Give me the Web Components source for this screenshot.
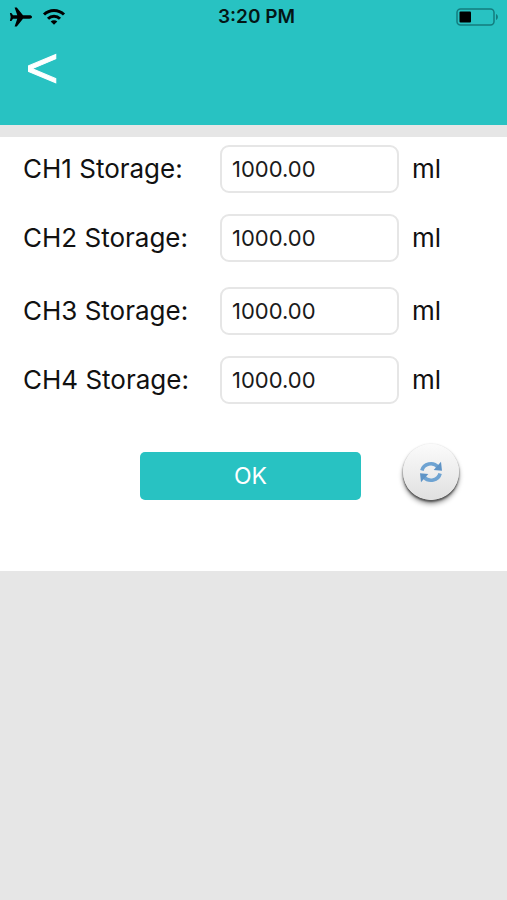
<!DOCTYPE html>
<html lang="en">
<head>
<meta charset="utf-8">
<meta name="viewport" content="width=device-width, initial-scale=1">
<title>Storage settings</title>
<style>
  html, body { margin: 0; min-height: 100%; }
  body { background: #e6e6e6; color: #111; font-family: Inter, "Liberation Sans", sans-serif; --teal: #28c2c2; }
</style>
</head>
<body>
<storage-page></storage-page>
<script>
const define = (name, html, setup) => customElements.define(name, class extends HTMLElement {
  constructor() {
    super();
    this.attachShadow({ mode: 'open' }).innerHTML = html;
  }
  connectedCallback() { if (setup) setup(this, this.shadowRoot); }
});

define('status-bar', `
<style>
  :host { display: grid; grid-template-columns: 1fr auto 1fr; align-items: center; height: 34px; padding: 0 8px; color: #041616; }
  .left { display: flex; align-items: center; gap: 10px; }
  .time { padding-left: 6px; font-size: 19px; line-height: 24px; font-weight: 600; }
  .battery { justify-self: end; }
  svg { display: block; }
</style>
<div class="left">
  <svg width="24" height="22" viewBox="0 0 24 22" role="img" aria-label="Airplane mode"><path fill="#000" d="M24 11c0-1.200-1.100-1.700-2.500-1.700h-6.500L8.800 1.500H6.600l2.700 7.800H5L3.400 6.900H1.900L2.700 11l-.8 4.100h1.500L5 12.700h4.300l-2.700 7.800h2.200l6.200-7.800h6.500c1.400 0 2.500-.5 2.500-1.700z"/></svg>
  <svg width="24" height="18" viewBox="0 0 24 18" role="img" aria-label="Wi-Fi"><g fill="none" stroke="#000" stroke-width="3"><path d="M2 6.500a14.300 14.300 0 0 1 20 0"/><path d="M6 10.700a8.500 8.500 0 0 1 12 0"/></g><path fill="#000" d="M8.700 13.500a4.700 4.700 0 0 1 6.600 0L12 16.800z"/></svg>
</div>
<div class="time">3:20 PM</div>
<svg class="battery" width="43" height="18" viewBox="0 0 43 18" role="img" aria-label="Battery low"><rect x="1" y="1" width="37" height="16" rx="3.500" fill="none" stroke="#137c7e" stroke-width="1.500"/><rect x="3.500" y="3.500" width="11.500" height="11" rx="1" fill="#000"/><path fill="#137c7e" d="M40 6c2.500.7 2.500 5.300 0 6z"/></svg>
`);

define('nav-bar', `
<style>
  :host { display: block; background: var(--teal); padding-bottom: 23px; }
  button { display: block; margin-left: 20px; width: 44px; height: 68px; padding: 0; border: 0; background: none; color: #fff; font: 56px/68px "Liberation Sans", Arial, sans-serif; -webkit-text-stroke: 1px #fff; text-align: center; }
</style>
<slot></slot>
<button type="button" aria-label="Back">&lt;</button>
`);

define('storage-field', `
<style>
  :host { display: grid; grid-template-columns: 197px 179px auto; align-items: center; }
  label, span { font-size: 26px; line-height: 32px; white-space: nowrap; }
  span { padding-left: 13px; }
  input { box-sizing: border-box; width: 100%; height: 48px; margin: 0; padding: 0 10px; border: 2px solid #e6e6e6; border-radius: 9px; background: #fff; color: #1a1a1a; font: 22px/28px Inter, "Liberation Sans", sans-serif; outline: 0; }
</style>
<label for="amount"></label>
<input id="amount" type="text" inputmode="decimal">
<span>ml</span>
`, (host, root) => {
  root.querySelector('label').textContent = host.getAttribute('label');
  root.querySelector('input').value = host.getAttribute('value');
});

define('field-pair', `
<style>:host { display: grid; gap: 21px; }</style>
<slot></slot>
`);

define('primary-button', `
<style>
  :host { display: block; }
  button { display: block; width: 100%; height: 48px; padding: 0; border: 0; border-radius: 5px; background: var(--teal); color: #fff; font: 23px/48px Inter, "Liberation Sans", sans-serif; }
</style>
<button type="button"><slot></slot></button>
`);

define('refresh-button', `
<style>
  :host { display: block; }
  button { display: grid; place-items: center; width: 56px; height: 56px; padding: 0; border: 0; border-radius: 50%; background: linear-gradient(#fbfbfb, #e0e0e0); box-shadow: 0 2px 2px #555, 0 4px 5px #0006, 0 0 2px #0002; }
</style>
<button type="button" aria-label="Refresh">
  <svg width="24" height="24" viewBox="0 0 24 24"><g fill="none" stroke="#6ea3d2" stroke-width="3.600"><path d="M2.900 10.500A9.200 8.600 0 0 1 19 7"/><path d="M21.100 13.500A9.200 8.600 0 0 1 5 17"/></g><path fill="#5f94c6" d="M22 1.800l1 9-8.300-.8zM2 22.200l-1-9 8.300.8z"/></svg>
</button>
`);

define('storage-page', `
<style>
  :host { display: block; }
  main { margin-top: 12px; background: #fff; padding: 8px 23px 71px; }
  form { display: grid; gap: 25px; }
  .actions { display: grid; grid-template-columns: 221px 56px; gap: 42px; padding: 15px 0 0 117px; align-items: end; }
</style>
<nav-bar><status-bar></status-bar></nav-bar>
<main>
  <form>
    <field-pair>
      <storage-field label="CH1 Storage:" value="1000.00"></storage-field>
      <storage-field label="CH2 Storage:" value="1000.00"></storage-field>
    </field-pair>
    <field-pair>
      <storage-field label="CH3 Storage:" value="1000.00"></storage-field>
      <storage-field label="CH4 Storage:" value="1000.00"></storage-field>
    </field-pair>
    <div class="actions">
      <primary-button>OK</primary-button>
      <refresh-button></refresh-button>
    </div>
  </form>
</main>
`);
</script>
</body>
</html>
